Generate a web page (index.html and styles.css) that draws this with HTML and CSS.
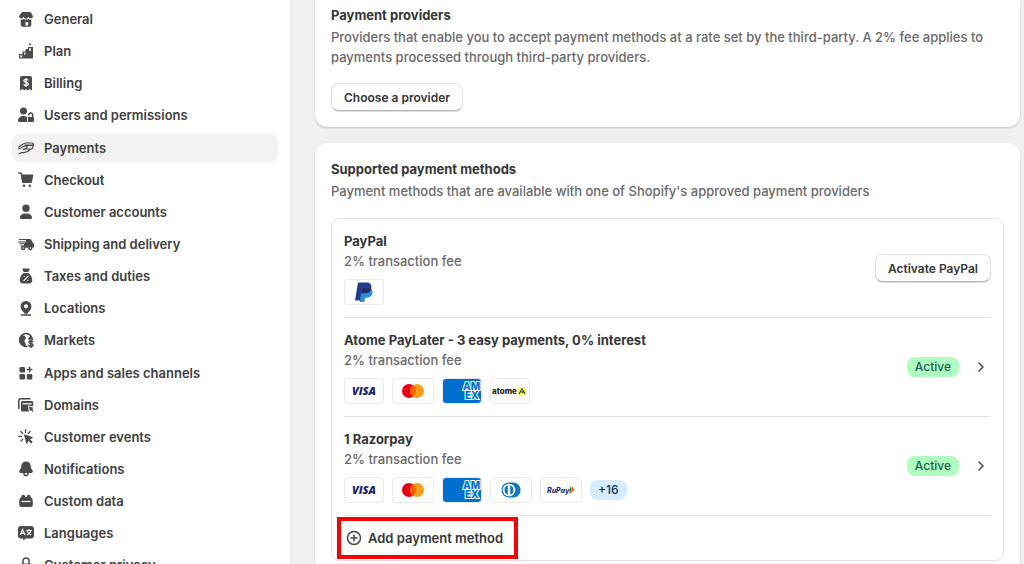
FILE: index.html
```html
<!DOCTYPE html>
<html lang="en">
<head>
    <meta charset="UTF-8">
    <meta name="viewport" content="width=device-width, initial-scale=1">
    <title>Settings - Payments</title>
    <link rel="stylesheet" href="styles.css">
</head>
<body>
    <div class="page">
        <nav class="sidebar">
            <a class="nav-item" href="#">
                <svg class="nav-icon" viewBox="0 0 16 16"><path fill-rule="evenodd" d="M4 1h8a1.200 1.200 0 0 1 1.100.7L15 5.200a2.300 2.300 0 0 1-4.500.6 2.600 2.600 0 0 1-5 0A2.300 2.300 0 0 1 1 5.200zM2.700 8.600c1.200.2 2.200-.2 2.800-.9 1.200 1.200 3.800 1.200 5 0 .6.7 1.600 1.100 2.800.9V13.800a2 2 0 0 1-2 2H4.700a2 2 0 0 1-2-2zM7.500 11v3.500h2.700V11z"/></svg>
                General
            </a>
            <a class="nav-item" href="#">
                <svg class="nav-icon" viewBox="0 0 16 16"><path d="M10.500.5h3l-1.500 2.200z"/><path fill-rule="evenodd" d="M10 4h5v11.500H2.500a1.500 1.500 0 0 1-1.500-1.500v-3h3.500V8.500H7.500V6H10zM11 5.200v2.500h2V5.200zM6 9.800v1.700h1.500V9.800zM2.300 12.200v2h2v-2z"/></svg>
                Plan
            </a>
            <a class="nav-item" href="#">
                <svg class="nav-icon" viewBox="0 0 16 16"><path d="M4 1h8a2 2 0 0 1 2 2v12.500l-2.500-1.500L9.500 15.500 8 14l-1.500 1.500L4.500 14 2 15.500V3a2 2 0 0 1 2-2z"/><path class="cut" d="M10.300 5.500C10 4.500 9 4.300 8 4.300c-1.200 0-2.200.5-2.200 1.500 0 2.200 4.500 1 4.500 3.200 0 1-1 1.600-2.300 1.600-1.100 0-2-.4-2.300-1.300M8 3v9"/></svg>
                Billing
            </a>
            <a class="nav-item" href="#">
                <svg class="nav-icon" viewBox="0 0 16 16"><circle cx="5.500" cy="4" r="3.500"/><path d="M0 13.500C0 10.800 2.500 9 5.500 9c1.500 0 2.700.4 3.600 1V15H1.500A1.500 1.500 0 0 1 0 13.500zM10 10h4.800a1.200 1.200 0 0 1 1.200 1.200v2.600a1.200 1.200 0 0 1-1.200 1.200H10z"/><path class="line" d="M10.800 8V7.800a1.900 1.900 0 0 1 3.800 0V10.500"/></svg>
                Users and permissions
            </a>
            <a class="nav-item active" href="#" aria-current="page">
                <svg class="nav-icon" viewBox="0 0 16 16"><path class="line thin" d="M7 9h6a1.700 1.700 0 0 0 1.600-1.200l.7-2.800A1.500 1.500 0 0 0 13.800 3H8.500C5.500 3 3.500 5.500.6 7"/><path class="line" d="M7 5.300h8"/><path class="line thin" d="M.6 8.800 3 8c1-1.500 3-1.800 5-2 1.500 0 1.500 1.500.3 2L5.500 9.500M12 9.500c-1.700 2-3.500 3-6 3.200H3.500L1 13.800"/></svg>
                Payments
            </a>
            <a class="nav-item" href="#">
                <svg class="nav-icon" viewBox="0 0 16 16"><path class="line" d="M.8 1h1.500c.6 0 1 .4 1.100 1l1.400 8.300h8.400"/><path d="M3 2.500h11.600a.6.6 0 0 1 .6.7l-1 5.800a1.200 1.200 0 0 1-1.200 1H4.300z"/><circle cx="6" cy="13.800" r="1.200"/><circle cx="11.800" cy="13.800" r="1.200"/></svg>
                Checkout
            </a>
            <a class="nav-item" href="#">
                <svg class="nav-icon" viewBox="0 0 16 16"><circle cx="8" cy="4.300" r="3.700"/><path d="M2 13.500c0-2.500 2.800-4 6-4s6 1.500 6 4a1.500 1.500 0 0 1-1.500 1.500h-9A1.500 1.500 0 0 1 2 13.500z"/></svg>
                Customer accounts
            </a>
            <a class="nav-item" href="#">
                <svg class="nav-icon" viewBox="0 0 16 16"><path d="M8.500 3h3.300c.7 0 1.300.4 1.600 1l1 2.500c1 .3 1.600 1 1.600 2v2c0 .8-.5 1.300-1.200 1.300h-.3a2.300 2.300 0 0 0-4.400 0H7.300a2.300 2.300 0 0 0-4.300-.5L2.300 9.500H6V8.300H1.500V7.300H7z"/><path class="line thin" d="M1.500 3.500h8.500M.6 6H7"/><circle class="line" cx="5.100" cy="12" r="1.500"/><circle class="line" cx="12.300" cy="12" r="1.500"/></svg>
                Shipping and delivery
            </a>
            <a class="nav-item" href="#">
                <svg class="nav-icon" viewBox="0 0 16 16"><path d="M5 .5h6a.6.6 0 0 1 .5.9L10.300 4H5.700L4.500 1.400A.6.6 0 0 1 5 .5zM5.700 5h4.600c2.500 1.500 4 4.500 4 7.300 0 2-1.300 3.200-3.200 3.200H4.900c-1.900 0-3.200-1.200-3.200-3.200C1.700 9.500 3.200 6.500 5.700 5z"/><path class="cut" d="m5.500 12.800 5-5M5.700 8.500h1M9.300 12.300h1"/></svg>
                Taxes and duties
            </a>
            <a class="nav-item" href="#">
                <svg class="nav-icon" viewBox="0 0 16 16"><path fill-rule="evenodd" d="M8 1a5.400 5.400 0 0 1 5.400 5.400c0 2.800-2 4.300-3.600 6.500-.8 1.300-2.800 1.300-3.600 0C4.600 10.700 2.600 9.200 2.600 6.400A5.400 5.400 0 0 1 8 1zm0 3.200a2.100 2.100 0 1 0 0 4.200 2.100 2.100 0 0 0 0-4.200z"/><path class="line" d="M3.500 15h9"/></svg>
                Locations
            </a>
            <a class="nav-item" href="#">
                <svg class="nav-icon" viewBox="0 0 16 16"><circle class="line" cx="8" cy="8" r="6.400"/><path d="M1.500 5.500C3 7 4.500 8 6.500 8.500V10c1.500.8 1.300 3 1.300 5C4.500 15 1.500 12 1.500 8zM1.500 7 4 3l3 1 1 2-1.500 2.500-2 1zM10 6.500l3-3.300 1.500 3.300-3.500 1.500z"/><path class="backdrop" d="M9.500 8H16v8H9.500z"/><path class="line" d="M14.700 9.700c-.4-.7-1.100-.9-1.900-.9-1 0-1.800.4-1.800 1.300 0 2 3.900.9 3.900 2.900 0 .9-.9 1.500-2 1.500-1 0-1.800-.4-2.100-1.200M12.900 7.700v8"/></svg>
                Markets
            </a>
            <a class="nav-item" href="#">
                <svg class="nav-icon" viewBox="0 0 16 16"><rect x="1.500" y="2" width="5.500" height="5.500" rx="1.300"/><rect x="1.500" y="9" width="5.500" height="5.500" rx="1.300"/><rect x="8.800" y="9" width="5.500" height="5.500" rx="1.300"/><path class="line" d="M11.600 2.300v4.500M9.300 4.500h4.500"/></svg>
                Apps and sales channels
            </a>
            <a class="nav-item" href="#">
                <svg class="nav-icon" viewBox="0 0 16 16"><path class="line" d="M.8 11.500V3.500a1.700 1.700 0 0 1 1.700-1.700H12"/><path d="M4.500 4h9.200A1.500 1.500 0 0 1 15.200 5.500V9.200L10 8.400 10.800 14.500H4.500A1.500 1.500 0 0 1 3 13V5.500A1.500 1.500 0 0 1 4.500 4z"/><path class="cut" d="M4.500 6.800h9.200"/><path d="m11 9.500 4.800 1.600-1.800 1 1.500 1.700-1 .9-1.500-1.700-1 1.500z"/></svg>
                Domains
            </a>
            <a class="nav-item" href="#">
                <svg class="nav-icon" viewBox="0 0 16 16"><path class="line thin" d="M7.500.7v2.800M2.800 2.500l2 2M.8 7.300h2.800M2.800 12.200l2-2M12.200 2.500l-2 2"/><path d="M6.200 6.200a.6.6 0 0 1 .8-.8l7.300 2.700c.6.3.6 1 0 1.200L12 10.200l2.800 2.800-1.600 1.600-2.900-2.800-.9 2.500c-.3.6-1 .6-1.200 0z"/></svg>
                Customer events
            </a>
            <a class="nav-item" href="#">
                <svg class="nav-icon" viewBox="0 0 16 16"><path d="M8 .5c2.800 0 4.600 2 4.700 4.600.1 2 .7 3 1.700 4.200.9 1.200.4 2.700-1.200 2.700H2.800c-1.600 0-2.100-1.500-1.200-2.700 1-1.200 1.600-2.200 1.700-4.200C3.400 2.500 5.200.5 8 .5z"/><path class="line" d="M6 12.500a2 2 0 0 0 4 0"/></svg>
                Notifications
            </a>
            <a class="nav-item" href="#">
                <svg class="nav-icon" viewBox="0 0 16 16"><path d="M4 2h2.500l.8 2h1.400l.8-2H12l1 2.500c1.200.6 1.800 2 1.800 3.500v3.500a2.500 2.500 0 0 1-2.500 2.500H3.700a2.500 2.500 0 0 1-2.500-2.500V8c0-1.500.6-2.900 1.800-3.500z"/><path class="cut" d="M3.500 8.500h9"/></svg>
                Custom data
            </a>
            <a class="nav-item" href="#">
                <svg class="nav-icon" viewBox="0 0 16 16"><path d="M3 1h10a3 3 0 0 1 3 3v6.500a3 3 0 0 1-3 3H7.500L5.700 15.500 5 13.500H3a3 3 0 0 1-3-3V4a3 3 0 0 1 3-3z"/><path class="cut" d="M2.300 10 4.600 4.500 7 10M3.200 8.300h2.900M8.300 5.500h5.500M11 4v1.500M12.800 6c-.6 2-2 3.300-4 4M9.300 6.500c.8 1.700 2 2.800 4 3.500"/></svg>
                Languages
            </a>
            <a class="nav-item" href="#">
                <svg class="nav-icon" viewBox="0 0 16 16"><path class="line" d="M5 7V4a3 3 0 0 1 6 0V7"/><path d="M4 6.500h8a1.500 1.500 0 0 1 1.500 1.500v5A1.500 1.500 0 0 1 12 14.500H4A1.500 1.500 0 0 1 2.500 13V8A1.500 1.500 0 0 1 4 6.500z"/></svg>
                Customer privacy
            </a>
        </nav>

        <main class="content">
            <section class="card providers">
                <h2>Payment providers</h2>
                <p>Providers that enable you to accept payment methods at a rate set by the third-party. A 2% fee applies to payments processed through third-party providers.</p>
                <button class="btn" type="button">Choose a provider</button>
            </section>

            <section class="card">
                <h2>Supported payment methods</h2>
                <p>Payment methods that are available with one of Shopify's approved payment providers</p>
                <div class="methods">
                    <div class="method">
                        <div class="method-info">
                            <h3>PayPal</h3>
                            <p>2% transaction fee</p>
                            <div class="logos">
                                <svg class="logo" viewBox="0 0 38 24" role="img" aria-label="PayPal"><path fill="#2790dc" d="M16 8h9.500c2 1.500 2.300 3.300 1.800 5.500-.7 3-3 4.300-6 4.300h-1.200L19.300 22h-4.500z"/><path fill="#253b90" d="M13 2.500h8.500c3.600 0 5.400 2 4.800 5.200-.6 3.800-3.200 5.500-6.800 5.500h-3.200L15 20.500h-5z"/><path fill="#222d65" d="M17.700 8.200h7.700c.3 0 .6.100.8.200-.8 3.300-3.300 4.800-6.700 4.800h-2.600z"/></svg>
                            </div>
                        </div>
                        <button class="btn" type="button">Activate PayPal</button>
                    </div>

                    <div class="method">
                        <div class="method-info">
                            <h3>Atome PayLater - 3 easy payments, 0% interest</h3>
                            <p>2% transaction fee</p>
                            <div class="logos">
                                <svg class="logo" viewBox="0 0 38 24"><text class="visa" x="19" y="16">VISA</text></svg>
                                <svg class="logo wide" viewBox="0 0 40 24" role="img" aria-label="Mastercard"><circle cx="16" cy="12" r="7" fill="#eb001b"/><circle cx="24" cy="12" r="7" fill="#f79e1b"/><path fill="#ff5f00" d="M20 6.300a7 7 0 0 1 0 11.400 7 7 0 0 1 0-11.400z"/></svg>
                                <svg class="logo amex" viewBox="0 0 38 24"><text x="20" y="11">AM</text><text x="22" y="20">EX</text></svg>
                                <svg class="logo" viewBox="0 0 38 24"><rect x="27" y="8" width="8" height="8" fill="#f0ff5f"/><text class="atome" x="1" y="15">atome</text><path d="m28 15 3-5.500 3 5.500M29.500 13h4" fill="none" stroke="#222"/></svg>
                            </div>
                        </div>
                        <span class="badge">Active</span>
                        <button class="chevron" type="button" aria-label="Open Atome PayLater"><svg viewBox="0 0 16 16"><path d="m6 4 4 4-4 4"/></svg></button>
                    </div>

                    <div class="method">
                        <div class="method-info">
                            <h3>1 Razorpay</h3>
                            <p>2% transaction fee</p>
                            <div class="logos">
                                <svg class="logo" viewBox="0 0 38 24"><text class="visa" x="19" y="16">VISA</text></svg>
                                <svg class="logo wide" viewBox="0 0 40 24" role="img" aria-label="Mastercard"><circle cx="16" cy="12" r="7" fill="#eb001b"/><circle cx="24" cy="12" r="7" fill="#f79e1b"/><path fill="#ff5f00" d="M20 6.300a7 7 0 0 1 0 11.400 7 7 0 0 1 0-11.400z"/></svg>
                                <svg class="logo amex" viewBox="0 0 38 24"><text x="20" y="11">AM</text><text x="22" y="20">EX</text></svg>
                                <svg class="logo wide" viewBox="0 0 40 24" role="img" aria-label="Diners Club"><path fill="#0f79be" d="M18 4.500h4c4.500 0 7.500 3.200 7.500 7.500s-3 7.500-7.500 7.500h-4c-4.200 0-7.500-3-7.500-7.500s3.300-7.500 7.500-7.500z"/><circle cx="18" cy="12" r="6.300" fill="#fff"/><path fill="#0f79be" d="M16.800 7.300v9.400a5 5 0 0 1 0-9.400zM19.200 7.300v9.400a5 5 0 0 0 0-9.400z"/></svg>
                                <svg class="logo wide" viewBox="0 0 40 24"><text class="rupay" x="6" y="15">RuPay</text><path fill="#1b8a4c" d="m29 8 2 4-3 4z"/><path fill="#f37a20" d="m31 8 3 4-5 4z"/></svg>
                                <span class="more">+16</span>
                            </div>
                        </div>
                        <span class="badge">Active</span>
                        <button class="chevron" type="button" aria-label="Open Razorpay"><svg viewBox="0 0 16 16"><path d="m6 4 4 4-4 4"/></svg></button>
                    </div>

                    <div class="add-row">
                        <button class="add-method" type="button">
                            <svg viewBox="0 0 16 16"><circle cx="8" cy="8" r="6.500"/><path d="M8 5v6M5 8h6"/></svg>
                            Add payment method
                        </button>
                        <span class="highlight"></span>
                    </div>
                </div>
            </section>
        </main>
    </div>
</body>
</html>
```

FILE: styles.css
```css
* {
    box-sizing: border-box;
}
body {
    margin: 0;
    overflow: hidden;
    background: #f0f0f0;
    color: #363636;
    font-family: Inter, "Liberation Sans", sans-serif;
    font-size: 13px;
    font-weight: 450;
    line-height: 20px;
}
h2, h3, p {
    margin: 0;
    font-size: 13px;
}
h2, h3 {
    font-weight: 650;
}
p {
    color: #6a6a6a;
}
button {
    font-family: inherit;
    color: inherit;
    cursor: pointer;
}
.page {
    display: grid;
    grid-template-columns: 292px 1fr;
    height: 100vh;
}

/* sidebar */
.sidebar {
    display: flex;
    flex-direction: column;
    gap: 4px;
    padding: 5px 12px;
    overflow: hidden;
    background: #fff;
    border-right: 2px solid #ebebeb;
    line-height: 1.55;
}
.nav-item {
    display: flex;
    flex: none;
    align-items: center;
    gap: 10px;
    padding: 4px 6px;
    border-radius: 8px;
    color: #404040;
    font-weight: 600;
    text-decoration: none;
}
.nav-item.active {
    background: #f2f2f2;
}
.nav-icon {
    flex: none;
    width: 16px;
    height: 16px;
    fill: #4a4a4a;
}
.nav-icon .line {
    fill: none;
    stroke: #4a4a4a;
    stroke-width: 1.5;
    stroke-linecap: round;
}
.nav-icon .thin {
    stroke-width: 1.2;
}
.nav-icon .cut {
    fill: none;
    stroke: #fff;
    stroke-width: 1.2;
}
.nav-icon .backdrop {
    fill: #fff;
}

/* cards */
.content {
    display: flex;
    flex-direction: column;
    gap: 16px;
    padding: 0 4px 0 23px;
    overflow: hidden;
}
.card {
    flex: none;
    padding: 16px;
    border-radius: 12px;
    background: #fff;
    box-shadow: 0 1px 2px rgba(0, 0, 0, 0.2);
}
.providers {
    padding-top: 5px;
    border-radius: 0 0 12px 12px;
}
.card > p {
    margin-top: 2px;
}
.btn {
    height: 28px;
    padding: 0 12px;
    border: 1px solid #e0e0e0;
    border-bottom-color: #b8b8b8;
    border-radius: 8px;
    background: #fff;
    font-size: 12px;
    font-weight: 600;
    box-shadow: 0 1px 0 #ddd;
}
.providers .btn {
    margin-top: 16px;
}

/* payment methods */
.methods {
    margin-top: 17px;
    border: 1px solid #e3e3e3;
    border-radius: 8px;
}
.method {
    display: flex;
    align-items: center;
    margin: 0 12px;
    padding: 12px 0;
    border-bottom: 1px solid #e3e3e3;
}
.method-info {
    flex: 1;
}
.logos {
    display: flex;
    align-items: center;
    gap: 8px;
    margin-top: 8px;
}
.logo {
    width: 40px;
    height: 26px;
    border: 1px solid #eaeaea;
    border-radius: 4px;
    background: #fff;
}
.logo.wide {
    width: 42px;
}
.logo.amex {
    background: #006fcf;
}
.amex text {
    fill: #006fcf;
    stroke: #fff;
    stroke-width: 2;
    paint-order: stroke;
    font-size: 10px;
    font-weight: 800;
    line-height: 1;
}
.visa {
    fill: #1a1f71;
    font-family: "Open Sans", sans-serif;
    font-size: 11px;
    font-style: italic;
    font-weight: 800;
    text-anchor: middle;
}
.atome {
    fill: #222;
    font-size: 8px;
    font-weight: 800;
}
.rupay {
    fill: #2b2e7f;
    font-size: 7px;
    font-style: italic;
    font-weight: 800;
}
.more {
    padding: 0 8px;
    border-radius: 8px;
    background: #d5ebff;
    color: #003a5a;
    font-size: 12px;
    font-weight: 500;
}
.badge {
    padding: 0 8px;
    border-radius: 8px;
    background: #affebf;
    color: #1c5f50;
    font-size: 12px;
    font-weight: 550;
}
.chevron {
    display: flex;
    margin-left: 12px;
    padding: 2px;
    border: 0;
    background: none;
}
.chevron svg, .add-method svg {
    width: 16px;
    height: 16px;
    fill: none;
    stroke: #4a4a4a;
    stroke-width: 1.5;
    stroke-linecap: round;
    stroke-linejoin: round;
}
.add-row {
    position: relative;
    padding: 8px 14px;
}
.add-method {
    display: flex;
    align-items: center;
    gap: 6px;
    padding: 4px 0;
    border: 0;
    background: none;
    font-size: 13px;
    font-weight: 600;
    line-height: 20px;
}
.highlight {
    position: absolute;
    top: 1px;
    left: 5px;
    width: 181px;
    height: 42px;
    border: 4px solid #fb0007;
    pointer-events: none;
}
```
